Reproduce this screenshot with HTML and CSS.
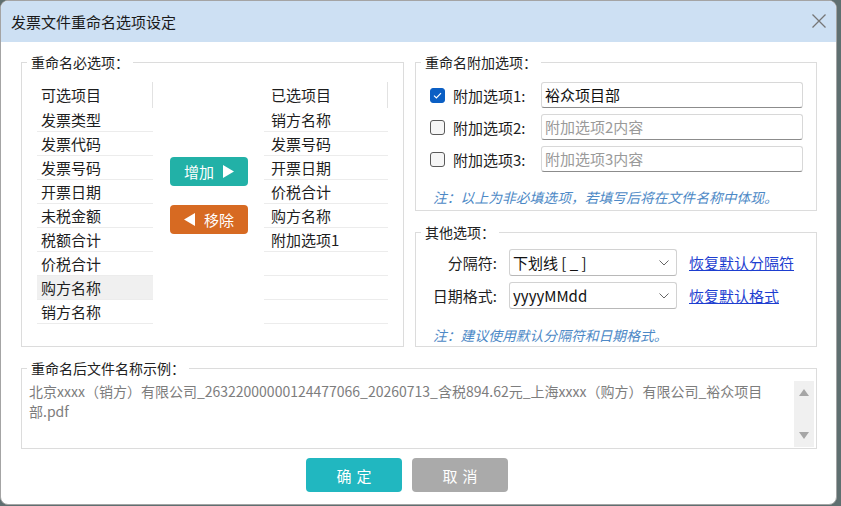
FILE: index.html
```html
<!DOCTYPE html>
<html lang="zh-CN">
<head>
<meta charset="utf-8">
<title>发票文件重命名选项设定</title>
<link rel="stylesheet" href="styles.css">
</head>
<body>
<div class="window">
  <div class="titlebar">
    <span class="title">发票文件重命名选项设定</span>
    <svg class="close" width="14" height="14" viewBox="0 0 14 14"><path d="M0.5 0.5 L13.5 13.5 M13.5 0.5 L0.5 13.5" stroke="#767676" stroke-width="1.3" fill="none"/></svg>
  </div>
  <div class="content">
    <div class="top">
      <fieldset class="group g-required">
        <legend>重命名必选项：</legend>
        <div class="lists">
          <div class="list list-left">
            <div class="lhead">可选项目</div>
            <div class="row">发票类型</div>
            <div class="row">发票代码</div>
            <div class="row">发票号码</div>
            <div class="row">开票日期</div>
            <div class="row">未税金额</div>
            <div class="row">税额合计</div>
            <div class="row">价税合计</div>
            <div class="row hl">购方名称</div>
            <div class="row">销方名称</div>
          </div>
          <div class="movebtns">
            <button class="mbtn add">增加<svg class="tri" width="11" height="13" viewBox="0 0 11 13"><path d="M0 0 L11 6.5 L0 13 Z" fill="#fff"/></svg></button>
            <button class="mbtn remove"><svg class="tri" width="11" height="13" viewBox="0 0 11 13"><path d="M11 0 L0 6.5 L11 13 Z" fill="#fff"/></svg>移除</button>
          </div>
          <div class="list list-right">
            <div class="lhead">已选项目</div>
            <div class="row">销方名称</div>
            <div class="row">发票号码</div>
            <div class="row">开票日期</div>
            <div class="row">价税合计</div>
            <div class="row">购方名称</div>
            <div class="row">附加选项1</div>
            <div class="row"></div>
            <div class="row"></div>
            <div class="row"></div>
          </div>
        </div>
      </fieldset>
      <div class="rightcol">
        <fieldset class="group g-extra">
          <legend>重命名附加选项：</legend>
          <div class="extrarows">
            <div class="erow">
              <span class="cb checked"><svg width="15" height="15" viewBox="0 0 15 15"><path d="M4 7.6 L6.4 10 L11 5.2" stroke="#fff" stroke-width="1.2" fill="none"/></svg></span>
              <span class="elabel">附加选项1:</span>
              <div class="tinput">裕众项目部</div>
            </div>
            <div class="erow">
              <span class="cb"></span>
              <span class="elabel">附加选项2:</span>
              <div class="tinput ph">附加选项2内容</div>
            </div>
            <div class="erow">
              <span class="cb"></span>
              <span class="elabel">附加选项3:</span>
              <div class="tinput ph">附加选项3内容</div>
            </div>
          </div>
          <p class="note note1">注：以上为非必填选项，若填写后将在文件名称中体现。</p>
        </fieldset>
        <fieldset class="group g-other">
          <legend>其他选项：</legend>
          <div class="orows">
            <div class="orow">
              <span class="olabel">分隔符:</span>
              <div class="select"><span>下划线 [ _ ]</span><svg width="10" height="6" viewBox="0 0 10 6"><path d="M0.5 0.5 L5 5 L9.5 0.5" stroke="#666" stroke-width="1" fill="none"/></svg></div>
              <a class="link" href="#">恢复默认分隔符</a>
            </div>
            <div class="orow">
              <span class="olabel">日期格式:</span>
              <div class="select"><span>yyyyMMdd</span><svg width="10" height="6" viewBox="0 0 10 6"><path d="M0.5 0.5 L5 5 L9.5 0.5" stroke="#666" stroke-width="1" fill="none"/></svg></div>
              <a class="link" href="#">恢复默认格式</a>
            </div>
          </div>
          <p class="note note2">注：建议使用默认分隔符和日期格式。</p>
        </fieldset>
      </div>
    </div>
    <fieldset class="group g-sample">
      <legend>重命名后文件名称示例：</legend>
      <div class="sample">
        <div class="sampletext">北京xxxx（销方）有限公司_26322000000124477066_20260713_含税894.62元_上海xxxx（购方）有限公司_裕众项目<br>部.pdf</div>
        <div class="scrollbar">
          <svg width="10" height="7" viewBox="0 0 10 7"><path d="M0 7 L5 0 L10 7 Z" fill="#a6a6a6"/></svg>
          <svg width="10" height="7" viewBox="0 0 10 7"><path d="M0 0 L5 7 L10 0 Z" fill="#a6a6a6"/></svg>
        </div>
      </div>
    </fieldset>
    <div class="actions">
      <button class="abtn ok">确定</button>
      <button class="abtn cancel">取消</button>
    </div>
  </div>
</div>
</body>
</html>
```

FILE: styles.css
```css
* { box-sizing: border-box; }
html, body { margin: 0; padding: 0; }
body {
  background: #5f6f70;
  width: 841px;
  height: 506px;
  font-family: "Noto Sans CJK SC", "Noto Sans", sans-serif;
  color: #1e1e1e;
  overflow: hidden;
}
.window {
  width: 837px;
  height: 505px;
  background: #fff;
  border: 1px solid #a4a4a4;
  border-radius: 8px;
  overflow: hidden;
}
.titlebar {
  height: 41px;
  background: #cde0f3;
  display: flex;
  align-items: center;
  justify-content: space-between;
  padding: 0 10px 0 10px;
}
.title { font-size: 15px; color: #1a1a1a; }
.close { display: block; margin-top: -2px; }
.content { padding: 10px 19px 0 20px; }
.top {
  display: grid;
  grid-template-columns: 383px 402px;
  column-gap: 11px;
}
.group {
  margin: 0;
  padding: 0;
  border: 1px solid #dcdcdc;
  min-width: 0;
}
.group legend {
  font-size: 14px;
  line-height: 20px;
  padding: 0 4px;
  margin-left: 5px;
  color: #222;
}
.g-required { height: 295px; }
.lists { display: flex; padding: 10px 0 0 15px; }
.list { font-size: 15px; color: #1e1e1e; }
.list-left { width: 116px; }
.list-right { width: 124px; margin-left: 16px; }
.lhead {
  height: 26px;
  line-height: 26px;
  border-right: 1px solid #e2e2e2;
  padding-left: 4px;
}
.row {
  height: 24px;
  line-height: 23px;
  border-bottom: 1px solid #ececec;
  padding-left: 4px;
}
.list-right .lhead, .list-right .row { padding-left: 7px; }
.row.hl { background: #f0f0f0; }
.movebtns {
  width: 78px;
  margin-left: 17px;
  display: flex;
  flex-direction: column;
  gap: 19px;
  padding-top: 75px;
}
.mbtn {
  height: 29px;
  border: none;
  border-radius: 4px;
  color: #fff;
  font-family: inherit;
  font-size: 15px;
  display: flex;
  align-items: center;
  justify-content: center;
  gap: 9px;
  padding: 0;
}
.mbtn.add { background: #22b1a7; }
.mbtn.remove { background: #d76a22; }
.tri { display: block; }
.rightcol { display: flex; flex-direction: column; gap: 11px; }
.g-extra { height: 159px; }
.extrarows { display: flex; flex-direction: column; gap: 6px; padding: 10px 13px 0 14px; }
.erow { display: flex; align-items: center; height: 26px; }
.cb {
  width: 15px;
  height: 15px;
  border: 1px solid #5a5a5a;
  border-radius: 3px;
  background: #f6f6f6;
  margin-right: 8px;
  flex: none;
}
.cb.checked { background: #0b5fc4; border-color: #0b5fc4; }
.cb svg { display: block; margin: -1px; }
.elabel { width: 88px; font-size: 15px; color: #1e1e1e; }
.tinput {
  flex: 1;
  height: 26px;
  border: 1px solid #d8d8d8;
  border-bottom-color: #8c8c8c;
  border-radius: 3px;
  font-size: 15px;
  line-height: 24px;
  padding-left: 3px;
  color: #111;
}
.tinput.ph { color: #9a9a9a; }
.note {
  margin: 0;
  font-size: 13.8px;
  line-height: 20px;
  font-style: italic;
  color: #4d89c6;
  padding-left: 17px;
}
.note1 { margin-top: 15px; }
.g-other { height: 125px; }
.orows { display: flex; flex-direction: column; gap: 6px; padding: 7px 13px 0 14px; }
.orow { display: flex; align-items: center; height: 27px; }
.olabel { width: 67px; text-align: right; font-size: 15px; margin-right: 12px; }
.select {
  width: 168px;
  height: 27px;
  border: 1px solid #d2d2d2;
  border-bottom-color: #b8b8b8;
  border-radius: 3px;
  display: flex;
  align-items: center;
  justify-content: space-between;
  padding: 0 7px 0 3px;
  font-size: 15px;
  color: #111;
}
.select svg { display: block; }
.link {
  margin-left: 12px;
  font-size: 15px;
  color: #1d3ed0;
  text-decoration: underline;
}
.note2 { margin-top: 16px; }
.g-sample { height: 91px; margin-top: 11px; }
.sample { display: flex; justify-content: space-between; padding: 3px 2px 0 7px; }
.sampletext {
  font-size: 14px;
  line-height: 19.5px;
  color: #7d7d7d;
  padding-top: 1px;
  white-space: nowrap;
}
.scrollbar {
  width: 20px;
  height: 66px;
  background: #f0f0f0;
  display: flex;
  flex-direction: column;
  align-items: center;
  justify-content: space-between;
  padding: 8px 0 8px 0;
}
.scrollbar svg { display: block; }
.actions { display: flex; gap: 10px; padding-left: 285px; margin-top: 9px; }
.abtn {
  width: 96px;
  height: 34px;
  border: none;
  border-radius: 4px;
  color: #fff;
  font-family: inherit;
  font-size: 15px;
  letter-spacing: 5px;
  text-indent: 5px;
  padding: 0;
}
.abtn.ok { background: #21b7c0; }
.abtn.cancel { background: #aaaaaa; }
```
